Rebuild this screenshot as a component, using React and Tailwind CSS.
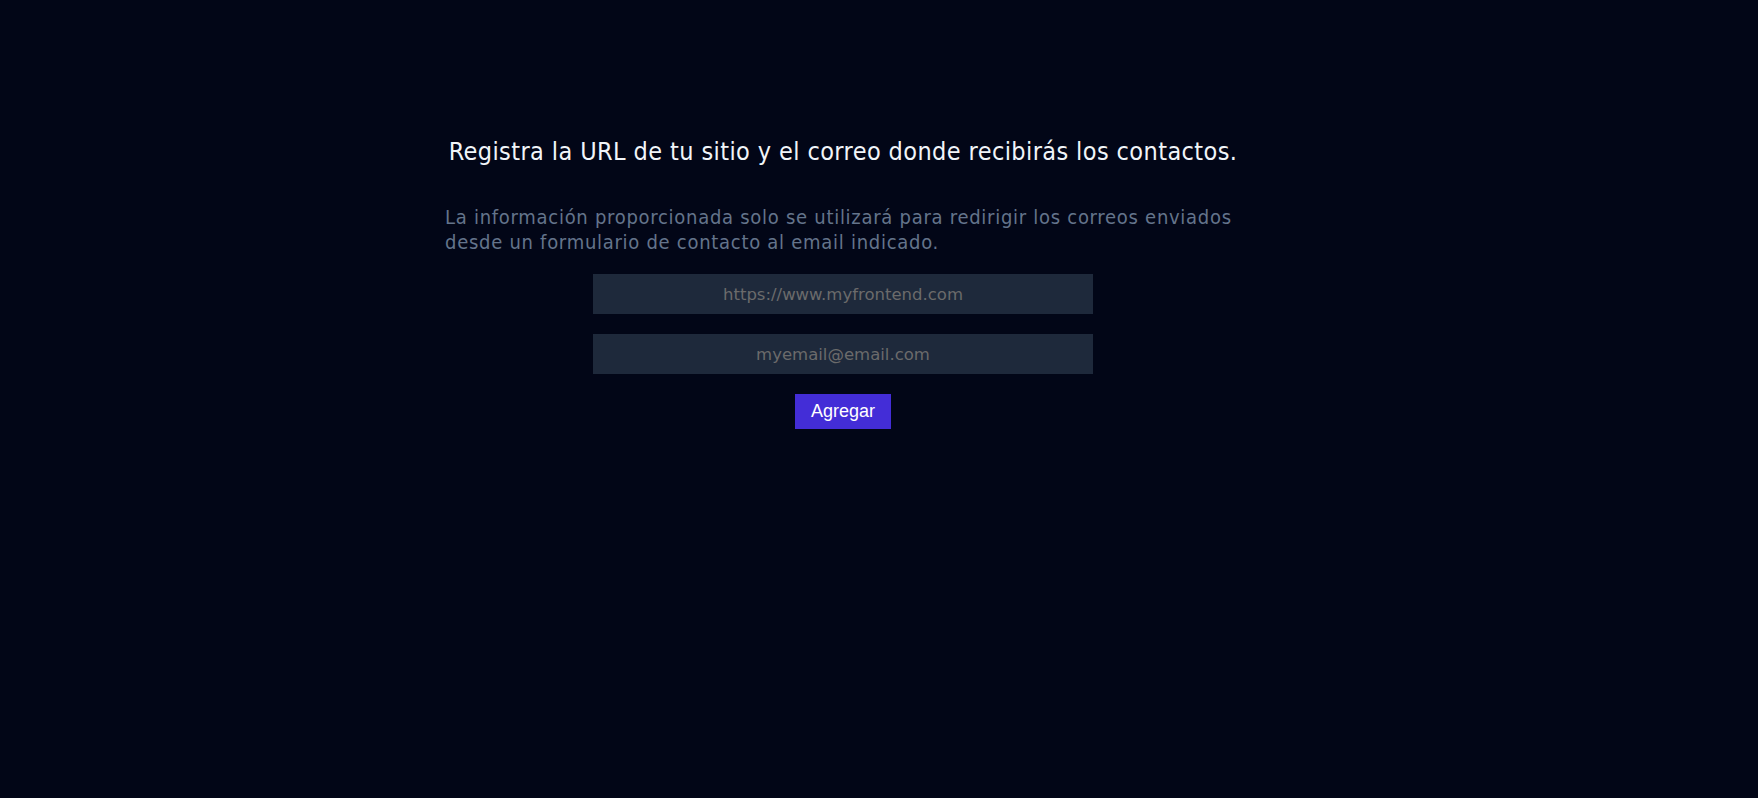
export default function App() {
  return (
    <div className="min-h-screen w-full bg-[#020617] flex justify-center pr-[72px]">
      <div className="w-[800px] flex flex-col items-center pt-[137px]">
        <h1
          className="text-[25px] leading-[29px] tracking-[0.4px] text-slate-100 text-center"
          style={{ fontFamily: "'DejaVu Sans Condensed', 'DejaVu Sans', sans-serif", fontStretch: "condensed" }}
        >
          Registra la URL de tu sitio y el correo donde recibirás los contactos.
        </h1>
        <p
          className="mt-[39px] w-full text-[20px] leading-[25px] tracking-[0.72px] text-[#64748b] text-left px-[2px]"
          style={{ fontFamily: "'DejaVu Sans Condensed', 'DejaVu Sans', sans-serif", fontStretch: "condensed" }}
        >
          La información proporcionada solo se utilizará para redirigir los correos enviados desde un formulario de contacto al email indicado.
        </p>
        <form className="mt-[19px] flex flex-col items-center gap-5">
          <input
            type="url"
            placeholder="https://www.myfrontend.com"
            className="w-[500px] h-10 bg-[#1e293b] text-center text-[16.5px] text-slate-200 placeholder:text-[#6b6b6b] outline-none font-['DejaVu_Sans',sans-serif]"
          />
          <input
            type="email"
            placeholder="myemail@email.com"
            className="w-[500px] h-10 bg-[#1e293b] text-center text-[16.5px] text-slate-200 placeholder:text-[#6b6b6b] outline-none font-['DejaVu_Sans',sans-serif]"
          />
          <button
            type="button"
            className="h-[35px] px-4 bg-[#432dd7] text-white text-[18px] font-['Liberation_Sans',Arial,sans-serif]"
          >
            Agregar
          </button>
        </form>
      </div>
    </div>
  );
}
